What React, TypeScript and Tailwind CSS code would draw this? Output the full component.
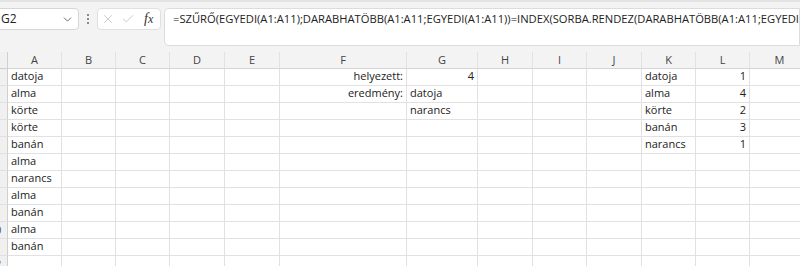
import { ChevronDown, X, Check } from "lucide-react";

type Cell = { t: string; right?: boolean };

const cols: string[] = ["A", "B", "C", "D", "E", "F", "G", "H", "I", "J", "K", "L", "M"];

// row -> column -> cell
const data: Record<number, Record<string, Cell>> = {
  1: { A: { t: "datoja" }, F: { t: "helyezett:", right: true }, G: { t: "4", right: true }, K: { t: "datoja" }, L: { t: "1", right: true } },
  2: { A: { t: "alma" }, F: { t: "eredmény:", right: true }, G: { t: "datoja" }, K: { t: "alma" }, L: { t: "4", right: true } },
  3: { A: { t: "körte" }, G: { t: "narancs" }, K: { t: "körte" }, L: { t: "2", right: true } },
  4: { A: { t: "körte" }, K: { t: "banán" }, L: { t: "3", right: true } },
  5: { A: { t: "banán" }, K: { t: "narancs" }, L: { t: "1", right: true } },
  6: { A: { t: "alma" } },
  7: { A: { t: "narancs" } },
  8: { A: { t: "alma" } },
  9: { A: { t: "banán" } },
  10: { A: { t: "alma" } },
  11: { A: { t: "banán" } },
  12: {},
};

const formula =
  "=SZŰRŐ(EGYEDI(A1:A11);DARABHATÖBB(A1:A11;EGYEDI(A1:A11))=INDEX(SORBA.RENDEZ(DARABHATÖBB(A1:A11;EGYEDI(A1:A11));;-1);G1))";

export default function App() {
  return (
    <div className="w-[800px] h-[266px] overflow-hidden bg-[#f3f3f3] font-['Open_Sans',sans-serif] text-[#222]">
      {/* formula bar */}
      <div className="h-[52px] border-t-2 border-[#e3e3e3] pt-[6px] flex items-start">
        <div className="-ml-[5px] w-[84px] h-[22px] bg-white border border-[#d6d6d6] rounded-[4px] flex items-center pl-[5px] pr-[4px] text-[12px]">
          <span className="flex-1">G2</span>
          <ChevronDown size={13} strokeWidth={1.6} className="text-[#555]" />
        </div>
        <div className="w-[18px] h-[22px] flex flex-col items-center justify-center gap-[2px]">
          <span className="w-[2px] h-[2px] bg-[#666] rounded-full" />
          <span className="w-[2px] h-[2px] bg-[#666] rounded-full" />
          <span className="w-[2px] h-[2px] bg-[#666] rounded-full" />
        </div>
        <div className="w-[64px] h-[22px] bg-white border border-[#e0e0e0] rounded-[4px] flex items-center pl-[3px] gap-[6px]">
          <X size={14} strokeWidth={1.2} className="text-[#b8b8b8]" />
          <Check size={14} strokeWidth={1.2} className="text-[#b8b8b8]" />
          <span className="ml-[3px] font-['Liberation_Serif',serif] italic text-[14px] text-[#333] leading-none">
            f<span className="text-[12px]">x</span>
          </span>
        </div>
        <div className="ml-[3px] flex-1 h-[38px] bg-white border border-[#dcdcdc] rounded-l-[5px] pl-[8px] text-[11.2px] leading-[20px] whitespace-nowrap overflow-hidden">
          {formula}
        </div>
      </div>

      {/* grid */}
      <div className="grid grid-cols-[8px_54px_54px_54px_55px_55px_127px_71px_55px_54px_55px_54px_54px_60px] text-[11px]">
        <div className="h-[17px] bg-[#f0f0f0] border-r border-b border-[#cfcfcf]" />
        {cols.map((c) => (
          <div
            key={c}
            className="h-[17px] bg-[#f3f3f3] border-r border-b border-r-[#e2e2e2] border-b-[#d4d4d4] flex items-center justify-center text-[#444]"
          >
            {c}
          </div>
        ))}
        {Object.keys(data).map((k) => {
          const r = Number(k);
          return [
            <div
              key={`h${r}`}
              className={`h-[17px] bg-[#f0f0f0] border-r border-b border-r-[#cfcfcf] border-b-[#e0e0e0] overflow-hidden flex items-center text-[11px] ${r === 11 ? "text-[#2b6cc4]" : "text-[#444]"}`}
            >
              <span className="shrink-0 w-[24px] -ml-[17px] text-center">{r}</span>
            </div>,
            ...cols.map((c) => {
              const cell = data[r][c];
              return (
                <div
                  key={`${c}${r}`}
                  className={`h-[17px] bg-white border-r border-b border-[#e1e1e1] flex items-end pb-[1px] px-[3px] whitespace-nowrap ${cell?.right ? "justify-end" : ""}`}
                >
                  {cell?.t}
                </div>
              );
            }),
          ];
        })}
      </div>
    </div>
  );
}
